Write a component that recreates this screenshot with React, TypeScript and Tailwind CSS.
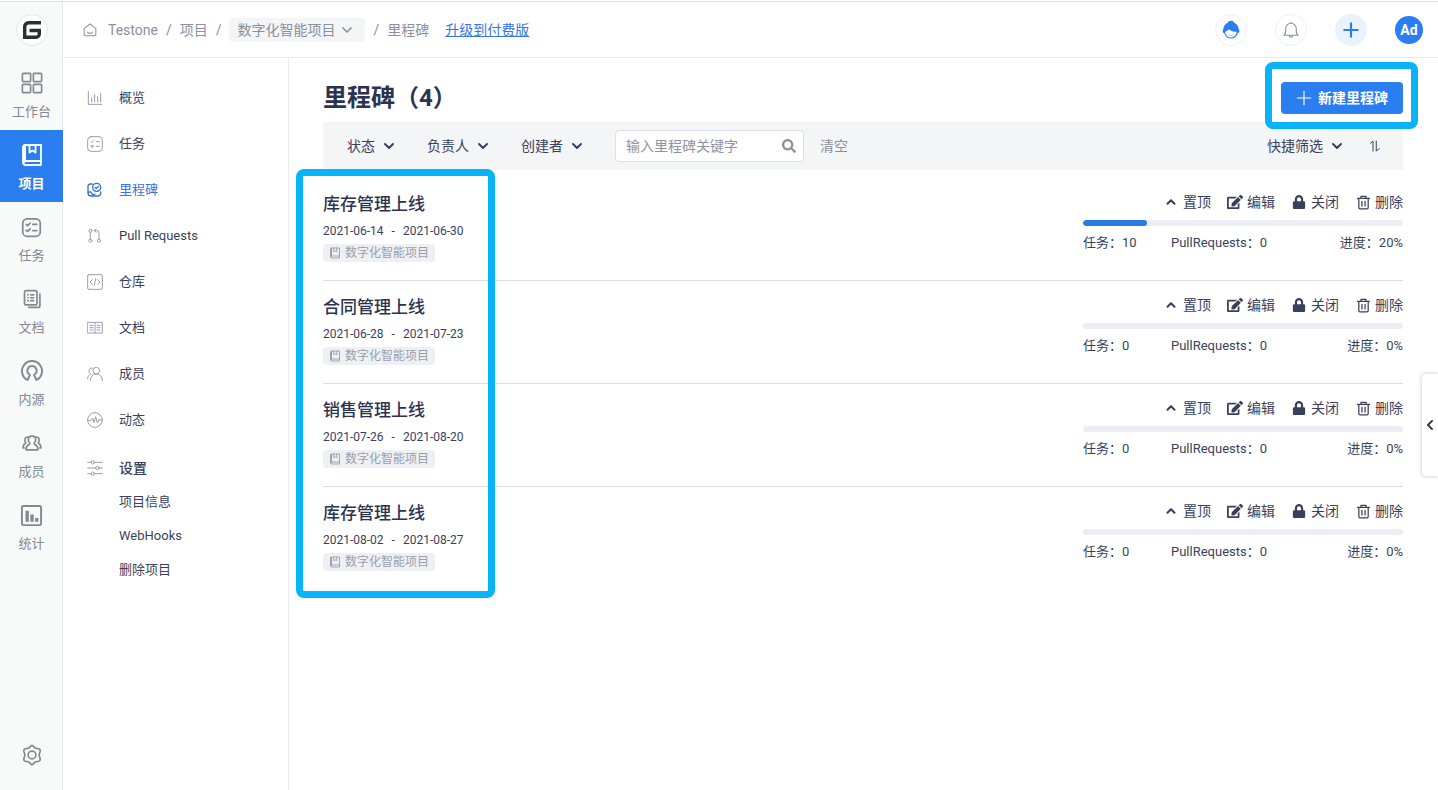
import type { ReactNode } from 'react'
import { ChevronDown, ChevronUp } from 'lucide-react'
import { FaChevronLeft, FaEdit, FaLock, FaSearch } from 'react-icons/fa'

type IconProps = { size?: number; width?: number; children: ReactNode }

function Icon({ size = 22, width = 1.5, children }: IconProps) {
  return (
    <svg
      width={size}
      height={size}
      viewBox="0 0 24 24"
      fill="none"
      stroke="currentColor"
      strokeWidth={width}
      strokeLinecap="round"
      strokeLinejoin="round"
      aria-hidden="true"
      className="shrink-0"
    >
      {children}
    </svg>
  )
}

const bookShape = (
  <>
    <path d="M3 20V4a2 2 0 0 1 2-2h16v16H5.500a2 2 0 0 0 0 4H21v-4" />
    <path d="M9.500 2v7.500l3-2 3 2V2" />
    <path d="M4.500 3v15" strokeWidth={3} />
  </>
)

const checklistShape = (
  <>
    <rect x="2" y="2" width="20" height="20" rx="5" />
    <path d="M6 8.500l1.500 1.500L10.500 7M13.500 8.500H18M6 15l1.500 1.500 3-3M13.500 15.500H18" />
  </>
)

const railItems = [
  {
    label: '工作台',
    icon: (
      <Icon size={22} width={1.800}>
        <rect x="1.500" y="1.500" width="9" height="9" rx="1" />
        <rect x="13.500" y="1.500" width="9" height="9" rx="1" />
        <rect x="1.500" y="13.500" width="9" height="9" rx="1" />
        <rect x="13.500" y="13.500" width="9" height="9" rx="1" />
      </Icon>
    ),
  },
  {
    label: '项目',
    active: true,
    icon: <Icon size={24} width={1.800}>{bookShape}</Icon>,
  },
  { label: '任务', icon: <Icon size={21} width={2}>{checklistShape}</Icon> },
  {
    label: '文档',
    icon: (
      <Icon size={20} width={2}>
        <rect x="3" y="2" width="15" height="17" rx="2" />
        <path d="M21.500 6v14a2 2 0 0 1-2 2H8M7 7h.500M10.500 7H14M7 10.500h.500M10.500 10.500H14M7 14h.500M10.500 14H14" />
      </Icon>
    ),
  },
  {
    label: '内源',
    icon: (
      <Icon size={24} width={1.900}>
        <path d="M7.500 21a10 10 0 1 1 9 0L14 16a4.700 4.700 0 1 0-4 0z" />
      </Icon>
    ),
  },
  {
    label: '成员',
    icon: (
      <Icon size={22} width={1.800}>
        <path d="M12 4.500c2.500 0 4 1.700 4 4 0 1.600-.6 2.700-1.500 3.500v1.200c2.500.9 4 2.400 4 6.300h-13c0-3.900 1.500-5.400 4-6.300V12C8.600 11.200 8 10.100 8 8.500c0-2.300 1.500-4 4-4z" />
        <path d="M7.500 5.500C5 5.500 4.200 7 4.200 8.800c0 1.300.4 2.300 1.100 3-2.100 1.100-3 3-3 5.700h1.200M16.500 5.500c2.500 0 3.300 1.500 3.300 3.300 0 1.300-.4 2.300-1.100 3 2.100 1.100 3 3 3 5.700h-1.200" />
      </Icon>
    ),
  },
  {
    label: '统计',
    icon: (
      <Icon size={23} width={2}>
        <rect x="2" y="2" width="20" height="20" rx="1.500" />
        <path d="M7.500 7v11.500M12.500 11v7.500M17.500 14.500v4" strokeWidth={3.500} strokeLinecap="butt" />
      </Icon>
    ),
  },
]

const navItems = [
  {
    label: '概览',
    icon: (
      <Icon size={16}>
        <path d="M2 2v19.500h20M7 18v-6M11.500 18V7M16 18v-8M20.500 18V5" />
      </Icon>
    ),
  },
  {
    label: '任务',
    icon: (
      <Icon size={16}>
        <rect x="1" y="1" width="22" height="22" rx="5" />
        <path d="M6 8.500l1.300 1.300L10 7M14 8.500h4.500M14 15.500h4.500" />
        <circle cx="7.500" cy="15.500" r="1.600" />
      </Icon>
    ),
  },
  {
    label: '里程碑',
    active: true,
    icon: (
      <Icon size={16} width={2}>
        <path d="M8 3H5a3.500 3.500 0 0 0-3.500 3.500v11A4.500 4.500 0 0 0 6 21h10.500a4 4 0 0 0 4-4v-2M2 16.500c2-3 4-2 5 .5s3 2.500 5 1" />
        <circle cx="14.500" cy="8" r="6" />
        <path d="M12 8l2 1.700 3-3" />
      </Icon>
    ),
  },
  {
    label: 'Pull Requests',
    icon: (
      <Icon size={16}>
        <circle cx="5" cy="4" r="2.300" />
        <circle cx="5" cy="19" r="2.300" />
        <circle cx="18" cy="19" r="2.300" />
        <path d="M5 6.300v10.400M18 16.700V7a3 3 0 0 0-3-3h-4M13.500 1.500L11 4l2.500 2.500" />
      </Icon>
    ),
  },
  {
    label: '仓库',
    icon: (
      <Icon size={16}>
        <rect x="1" y="1" width="22" height="22" rx="2" />
        <path d="M8 8.500L4.500 12 8 15.500M16 8.500l3.500 3.500-3.500 3.500M13 7l-2 10" />
      </Icon>
    ),
  },
  {
    label: '文档',
    icon: (
      <Icon size={16}>
        <path d="M1 3.500h22v16H1zM12 3.500v16M4.500 8H9M4.500 11.500H9M4.500 15H9M15 8h4.500M15 11.500h4.500M15 15h4.500" />
      </Icon>
    ),
  },
  {
    label: '成员',
    icon: (
      <Icon size={16}>
        <circle cx="14" cy="7" r="5" />
        <path d="M5 22c0-6 3.500-10 9-10s9 4 9 10M8 3.200C5 2.500 3 4.500 3 7.500c0 2 1 3.500 2.500 4.200C3 12.500 1 15 1 19" />
      </Icon>
    ),
  },
  {
    label: '动态',
    icon: (
      <Icon size={16}>
        <circle cx="12" cy="12" r="11" />
        <path d="M1 13h5l2.500-4 2 7 2.500-9 2.500 9 2-4H23" />
      </Icon>
    ),
  },
]

const milestones = [
  { id: 1, title: '库存管理上线', start: '2021-06-14', end: '2021-06-30', tasks: 10, progress: 20 },
  { id: 2, title: '合同管理上线', start: '2021-06-28', end: '2021-07-23', tasks: 0, progress: 0 },
  { id: 3, title: '销售管理上线', start: '2021-07-26', end: '2021-08-20', tasks: 0, progress: 0 },
  { id: 4, title: '库存管理上线', start: '2021-08-02', end: '2021-08-27', tasks: 0, progress: 0 },
]

function Select({ label }: { label: string }) {
  return (
    <div className="relative text-[#3a3f5c]">
      <select
        aria-label={label}
        className="block appearance-none bg-transparent pr-[22px] text-sm leading-5 outline-none"
      >
        <option>{label}</option>
      </select>
      <ChevronDown
        size={16}
        strokeWidth={3}
        className="pointer-events-none absolute right-0 top-0.5"
      />
    </div>
  )
}

function Rail() {
  return (
    <nav className="flex w-[63px] shrink-0 flex-col bg-[#f8f9f9] shadow-[inset_-1px_0_0_#e6e9ef]">
      <a href="#" aria-label="Gitee" className="flex h-14 items-center justify-center">
        <span className="flex size-8 items-center justify-center rounded-full border border-[#e6e6e8] bg-white">
          <svg width="20" height="20" viewBox="0 0 20 20" fill="none" stroke="#2c3036" strokeWidth="3.400">
            <path d="M19 2.700H6.500A4 4 0 0 0 2.700 6.700v10.600H14a3.300 3.300 0 0 0 3.300-3.300v-3.500H7.500" />
          </svg>
        </span>
      </a>
      {railItems.map((item) => (
        <a
          key={item.label}
          href="#"
          className={
            item.active
              ? 'flex h-18 flex-col items-center gap-[7px] bg-[#2a7ef0] pt-3 font-bold text-white'
              : 'flex h-18 flex-col items-center gap-[7px] pt-3 text-[#84888f]'
          }
        >
          <span className="flex h-[26px] items-center">{item.icon}</span>
          <span className="text-[13px] leading-[18px]">{item.label}</span>
        </a>
      ))}
      <button aria-label="设置" className="mt-auto flex justify-center pb-6 text-[#84888f]">
        <Icon size={22} width={1.800}>
          <path d="M12 1.500c1.300 0 2 2 3.400 2.800 1.500.9 3.700.2 4.900 1.300.9 1 .8 1.700.4 3.100-.5 1.500-.9 2.100-.9 3.300s.4 1.800.9 3.300c.4 1.400.5 2.100-.4 3.100-1.200 1.100-3.400.4-4.900 1.300-1.400.8-2.100 2.800-3.400 2.800s-2-2-3.400-2.800c-1.500-.9-3.700-.2-4.900-1.300-.9-1-.8-1.700-.4-3.100.5-1.500.9-2.100.9-3.300s-.4-1.800-.9-3.300c-.4-1.400-.5-2.100.4-3.100 1.200-1.100 3.400-.4 4.900-1.300C10 3.500 10.700 1.500 12 1.500z" />
          <circle cx="12" cy="12" r="4.300" />
        </Icon>
      </button>
    </nav>
  )
}

function Header() {
  return (
    <header className="flex h-14 items-center justify-between border-b border-[#e9ebef] pl-5 pr-[15px]">
      <div className="flex items-center text-sm leading-5 text-[#8b909e]">
        <a href="#" aria-label="首页" className="mr-[11px]">
          <Icon size={14} width={1.800}>
            <path d="M2 9.500L12 1.500l10 8V20a2 2 0 0 1-2 2H4a2 2 0 0 1-2-2zM7.500 15.500c2 3 7 3 9 0" />
          </Icon>
        </a>
        <a href="#">Testone</a>
        <span className="mx-2">/</span>
        <a href="#">项目</a>
        <span className="mx-2">/</span>
        <div className="relative rounded-sm bg-[#f4f5f7] px-2 py-0.5">
          <select aria-label="切换项目" className="block appearance-none bg-transparent pr-[22px] outline-none">
            <option>数字化智能项目</option>
          </select>
          <ChevronDown size={16} strokeWidth={2.500} className="pointer-events-none absolute right-2.5 top-1" />
        </div>
        <span className="mx-2">/</span>
        <span>里程碑</span>
        <a href="#" className="ml-4 text-[#3676e8] underline">
          升级到付费版
        </a>
      </div>

      <div className="flex items-center gap-7">
        <button aria-label="客服" className="flex size-8 items-center justify-center rounded-full border border-[#eef0f2]">
          <svg width="18" height="20" viewBox="0 0 18 20" fill="none">
            <path
              d="M9 .800c1.700 0 2.800.7 3.200 1.900 2.600 1.200 4.300 3.400 4.400 6.300.7.500.9 1.200.7 2.400-.2 1-.8 1.600-1.600 1.800C14.700 16.500 12.300 18.600 9 18.600S3.300 16.500 2.300 13.200c-.8-.2-1.400-.8-1.600-1.800-.2-1.200 0-1.900.7-2.400.1-2.900 1.800-5.100 4.400-6.300C6.200 1.500 7.300.800 9 .800z"
              fill="#2a7ef0"
            />
            <path d="M3.400 13c-.2-1 .2-1.600 1.200-2 1-.4 1.800-1 2.400-1.800 1.800 1.800 4.300 2.600 7.600 2.600-.3 3.500-2.500 5.700-5.600 5.700-2.900 0-5-1.700-5.600-4.500z" fill="#fff" />
            <path d="M6.500 14.800c1.500 1.300 3.500 1.300 5 0" stroke="#9ec3f7" strokeWidth="1" />
          </svg>
        </button>
        <button aria-label="通知" className="flex size-8 items-center justify-center rounded-full border border-[#eef0f2] text-[#8b909e]">
          <Icon size={18} width={1.500}>
            <path d="M2.500 19h19c-1.800-1.200-2.500-3-2.500-5.500V10a7 7 0 0 0-14 0v3.500c0 2.500-.7 4.300-2.500 5.500zM9.500 19c.2 3.600 4.800 3.600 5 0M12 3V1.500" />
          </Icon>
        </button>
        <button aria-label="新建" className="flex size-8 items-center justify-center rounded-full bg-[#eaf2fd] text-[#2a7ef0]">
          <Icon size={18} width={2.900}>
            <path d="M12 3v18M3 12h18" />
          </Icon>
        </button>
        <button className="size-7 rounded-full bg-[#2a7ef0] text-sm font-bold text-white">Ad</button>
      </div>
    </header>
  )
}

function SideNav() {
  return (
    <aside className="w-[226px] shrink-0 border-r border-[#e9ebf0] pt-[17px] text-[13px] text-[#3a3f5c]">
      {navItems.map((item) => (
        <a
          key={item.label}
          href="#"
          className={
            item.active
              ? 'flex h-[46px] items-center gap-4 pl-6 text-[#3673e8]'
              : 'flex h-[46px] items-center gap-4 pl-6'
          }
        >
          <span className={item.active ? 'text-[#3673c8]' : 'text-[#989ead]'}>{item.icon}</span>
          {item.label}
        </a>
      ))}
      <a href="#" className="mt-2 flex h-[34px] items-center gap-4 pl-6 text-sm font-medium">
        <span className="text-[#989ead]">
          <Icon size={16}>
            <path d="M1 3.500h5M11 3.500h12M1 12h12M18 12h5M1 20.500h5M11 20.500h12" />
            <circle cx="8.500" cy="3.500" r="2.500" />
            <circle cx="15.500" cy="12" r="2.500" />
            <circle cx="8.500" cy="20.500" r="2.500" />
          </Icon>
        </span>
        设置
      </a>
      {['项目信息', 'WebHooks', '删除项目'].map((label) => (
        <a key={label} href="#" className="flex h-[34px] items-center pl-14">
          {label}
        </a>
      ))}
    </aside>
  )
}

function Action({ label, icon }: { label: string; icon: ReactNode }) {
  return (
    <button className="flex items-center gap-1">
      <span className="flex w-4 justify-center">{icon}</span>
      {label}
    </button>
  )
}

function MilestoneRow({ item }: { item: (typeof milestones)[number] }) {
  return (
    <li className="flex justify-between border-b border-[#dcdde1] pb-[18px] pt-3.5 last:border-b-0">
      <div className="flex flex-col items-start">
        <h2 className="text-[17px] font-medium leading-6 text-[#2b3350]">{item.title}</h2>
        <p className="mt-[5px] flex gap-2 text-xs leading-5">
          <span>{item.start}</span>
          <span>-</span>
          <span>{item.end}</span>
        </p>
        <span className="mt-[3px] flex h-[18px] items-center gap-1 rounded-sm bg-[#eff0f3] px-1.5 text-xs text-[#999fac]">
          <Icon size={12} width={1.800}>
            {bookShape}
          </Icon>
          数字化智能项目
        </span>
      </div>

      <div className="w-80">
        <div className="flex justify-end gap-4 text-sm leading-5">
          <Action label="置顶" icon={<ChevronUp size={14} strokeWidth={3.500} />} />
          <Action label="编辑" icon={<FaEdit size={16} />} />
          <Action label="关闭" icon={<FaLock size={14} />} />
          <Action
            label="删除"
            icon={
              <Icon size={15} width={2}>
                <path d="M2.500 5.500h19M8 5V2h8v3M4.500 6v14a2 2 0 0 0 2 2h11a2 2 0 0 0 2-2V6M9.500 10v7.500M14.500 10v7.500" />
              </Icon>
            }
          />
        </div>
        <div className="mt-2 h-1.5 overflow-hidden rounded-full bg-[#ecedf5]">
          <div className="h-full rounded-full bg-[#2a7ae4]" style={{ width: `${item.progress}%` }} />
        </div>
        <div className="mt-[7px] flex text-[13px] leading-5">
          <span className="w-22">任务：{item.tasks}</span>
          <span>PullRequests：0</span>
          <span className="ml-auto">进度：{item.progress}%</span>
        </div>
      </div>
    </li>
  )
}

export default function App() {
  return (
    <div className="min-h-screen bg-white pt-px font-['Roboto','Noto_Sans_CJK_SC',sans-serif] text-[#3a3f5c]">
      <div className="flex min-h-[calc(100vh-1px)] border-t border-[#dcdee1]">
        <Rail />
        <div className="flex min-w-0 flex-1 flex-col">
          <Header />
          <div className="flex flex-1">
            <SideNav />
            <main className="min-w-0 flex-1 pl-[34px] pr-[35px] pt-6">
              <div className="mb-2 flex h-8 items-center justify-between">
                <h1 className="text-2xl font-bold text-[#2b3350]">里程碑（4）</h1>
                <div className="relative">
                  <button className="flex h-8 items-center gap-1.5 rounded-sm bg-[#2a7ef0] px-[15px] text-sm font-bold text-white">
                    <Icon size={16} width={1.700}>
                      <path d="M12 2v20M2 12h20" />
                    </Icon>
                    新建里程碑
                  </button>
                  <div className="pointer-events-none absolute -bottom-[15px] -left-4 -right-[15px] -top-5 rounded-lg border-7 border-[#08b4f7]" />
                </div>
              </div>

              <div className="flex h-12 items-center bg-[#f4f5f7] pl-6 pr-[22px]">
                <div className="flex gap-[30px]">
                  <Select label="状态" />
                  <Select label="负责人" />
                  <Select label="创建者" />
                </div>
                <div className="relative ml-[30px] w-[189px]">
                  <input
                    type="text"
                    aria-label="输入里程碑关键字"
                    placeholder="输入里程碑关键字"
                    className="block h-8 w-full rounded-sm border border-[#dcdfe8] bg-white px-2.5 text-sm outline-none placeholder:text-[#8f94a3]"
                  />
                  <FaSearch size={14} className="absolute right-2 top-[9px] text-[#8b909e]" />
                </div>
                <button className="ml-4 text-sm text-[#8b909e]">清空</button>
                <div className="ml-auto flex items-center gap-6">
                  <Select label="快捷筛选" />
                  <button aria-label="排序">
                    <Icon size={12} width={2}>
                      <path d="M3 6.500L8 2v20M14.500 2v20l6-4.500" />
                    </Icon>
                  </button>
                </div>
              </div>

              <div className="relative pt-2">
                <ul>
                  {milestones.map((item) => (
                    <MilestoneRow key={item.id} item={item} />
                  ))}
                </ul>
                <div className="pointer-events-none absolute -bottom-[9px] -left-[27px] -top-px w-[199px] rounded-lg border-7 border-[#08b4f7]" />
              </div>
            </main>
          </div>
        </div>
      </div>

      <button
        aria-label="展开"
        className="fixed right-0 top-[374px] flex h-[102px] w-4 items-center justify-center rounded-l-sm bg-white text-[#2b3350] shadow-[0_0_4px_rgba(0,0,0,0.25)]"
      >
        <FaChevronLeft size={12} />
      </button>
    </div>
  )
}
